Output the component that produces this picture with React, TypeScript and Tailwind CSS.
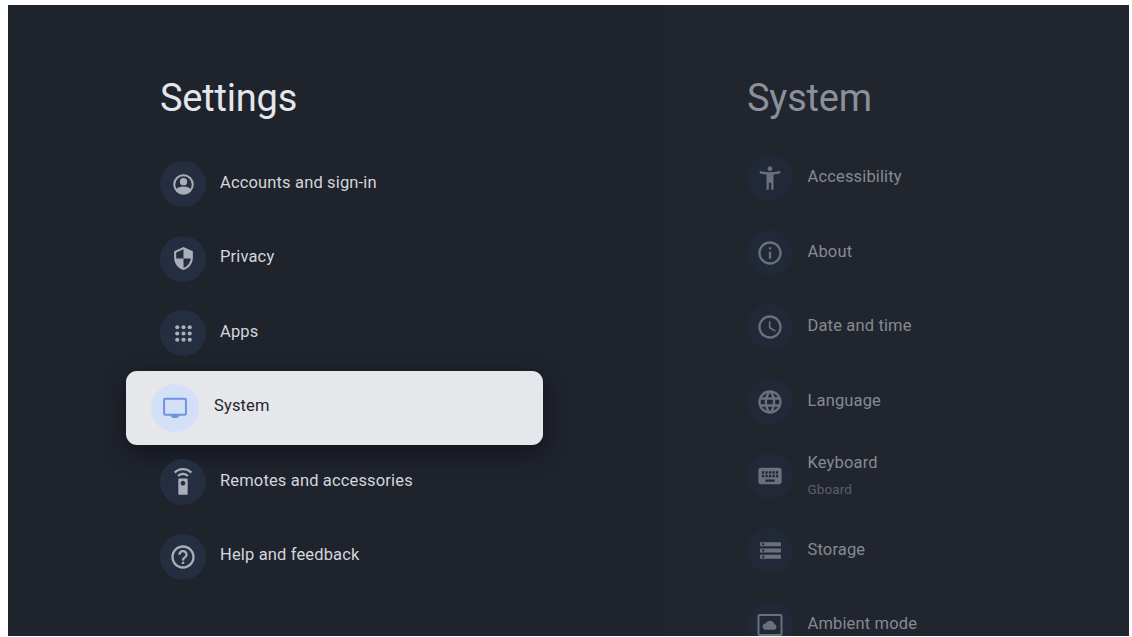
import type { ReactNode } from 'react';
import clsx from 'clsx';
import {
  MdAccessibilityNew,
  MdAccessTime,
  MdHelpOutline,
  MdInfoOutline,
  MdKeyboard,
  MdLanguage,
  MdSecurity,
  MdSettingsRemote,
  MdStorage,
} from 'react-icons/md';

type Item = {
  label: string;
  sub?: string;
  icon: ReactNode;
  active?: boolean;
};

function AccountIcon() {
  return (
    <svg viewBox="0 0 24 24" className="size-[25px]" fill="currentColor">
      <circle cx="12" cy="12" r="8.9" fill="none" stroke="currentColor" strokeWidth="1.9" />
      <circle cx="12" cy="9.3" r="3.5" />
      <path d="M4.600 17c1.600-2.200 4.200-3.200 7.400-3.200s5.800 1 7.400 3.200A9 9 0 0 1 12 21a9 9 0 0 1-7.400-4z" />
    </svg>
  );
}

function AppsIcon() {
  const dots = [6, 12, 18];
  return (
    <svg viewBox="0 0 24 24" className="size-[25px]" fill="currentColor">
      {dots.map((y) => dots.map((x) => <circle key={`${x}-${y}`} cx={x} cy={y} r="2" />))}
    </svg>
  );
}

function TvIcon() {
  return (
    <svg viewBox="0 0 24 24" className="size-[26px]" fill="currentColor">
      <rect x="1.9" y="3.5" width="20.2" height="14.8" rx="1.2" fill="none" stroke="currentColor" strokeWidth="1.8" />
      <path d="M8 18h8v2h-1.5v1.3h-5V20H8z" />
    </svg>
  );
}

function AmbientIcon() {
  return (
    <svg viewBox="0 0 26 24" className="h-6 w-[26px]" fill="currentColor">
      <rect x="1.5" y="2" width="23" height="20" rx="1" fill="none" stroke="currentColor" strokeWidth="2" />
      <path d="M9 16.8a3.200 3.200 0 0 1-.3-6.400 4.600 4.600 0 0 1 8.500.6 2.950 2.950 0 0 1-.2 5.800z" />
    </svg>
  );
}

const settings: Item[] = [
  { label: 'Accounts and sign-in', icon: <AccountIcon /> },
  { label: 'Privacy', icon: <MdSecurity size={25} /> },
  { label: 'Apps', icon: <AppsIcon /> },
  { label: 'System', icon: <TvIcon />, active: true },
  { label: 'Remotes and accessories', icon: <MdSettingsRemote size={28} /> },
  { label: 'Help and feedback', icon: <MdHelpOutline size={28} /> },
];

const system: Item[] = [
  { label: 'Accessibility', icon: <MdAccessibilityNew size={28} /> },
  { label: 'About', icon: <MdInfoOutline size={28} /> },
  { label: 'Date and time', icon: <MdAccessTime size={28} /> },
  { label: 'Language', icon: <MdLanguage size={28} /> },
  { label: 'Keyboard', sub: 'Gboard', icon: <MdKeyboard size={28} /> },
  { label: 'Storage', icon: <MdStorage size={25} /> },
  { label: 'Ambient mode', icon: <AmbientIcon /> },
];

function SettingsRow({ item }: { item: Item }) {
  return (
    <li
      className={clsx(
        'flex h-[74.5px] items-center',
        item.active
          ? '-ml-[34px] w-[417px] rounded-[11px] bg-[#e6e7eb] pl-[25px] text-[#24262c] shadow-[0_8px_20px_1px_rgba(10,12,18,0.5)]'
          : 'text-[#d3d6dc]',
      )}
    >
      <span
        className={clsx(
          'flex shrink-0 items-center justify-center rounded-full',
          item.active ? 'size-12 bg-[#d3e0f8] text-[#6f93dc]' : 'size-[46px] bg-[#252e40] text-[#a9aeb9]',
        )}
      >
        {item.icon}
      </span>
      <span className={clsx('-mt-[2px] text-[16.5px] tracking-[0.15px]', item.active ? 'ml-[15px]' : 'ml-[14px]')}>
        {item.label}
      </span>
    </li>
  );
}

function SystemRow({ item }: { item: Item }) {
  return (
    <li className="flex h-[74.5px] shrink-0 items-center">
      <span className="flex size-[46px] shrink-0 items-center justify-center rounded-full bg-[#212838] text-[#6b7079]">
        {item.icon}
      </span>
      <div className="-mt-[2px] ml-[14.5px]">
        <p className="text-[16.5px] leading-6 tracking-[0.15px] text-[#868a92]">{item.label}</p>
        {item.sub && <p className="mt-1 text-[13.5px] leading-5 tracking-[0.1px] text-[#5b5f68]">{item.sub}</p>}
      </div>
    </li>
  );
}

export default function App() {
  return (
    <div className="h-[637px] w-[1132px] overflow-hidden bg-white pt-[5px] pl-2 font-['Roboto',sans-serif]">
      <div className="flex h-[631px] w-[1121px] overflow-hidden bg-[#1f232c]">
        {/* main menu */}
        <main className="w-[656px] shrink-0 pt-[69px] pl-[152px]">
          <h1 className="text-[38px] leading-[48px] tracking-[-0.2px] text-[#e4e6ec]">Settings</h1>
          <ul className="mt-[25px]">
            {settings.map((item) => (
              <SettingsRow key={item.label} item={item} />
            ))}
          </ul>
        </main>

        {/* preview of the selected entry */}
        <aside className="h-full flex-1 overflow-hidden bg-[#21252e] pt-[69px] pl-[83px]">
          <h2 className="text-[38px] leading-[48px] tracking-[-0.2px] text-[#8c9099]">System</h2>
          <ul className="mt-[19px]">
            {system.map((item) => (
              <SystemRow key={item.label} item={item} />
            ))}
          </ul>
        </aside>
      </div>
    </div>
  );
}
